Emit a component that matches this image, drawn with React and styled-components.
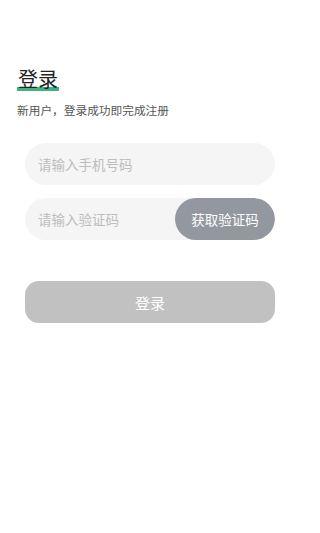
import React from "react";
import styled, { createGlobalStyle } from "styled-components";

const Global = createGlobalStyle`
  html, body { margin: 0; padding: 0; background: #fff; }
  body { font-family: "Noto Sans CJK SC", "Noto Sans", sans-serif; }
  * { box-sizing: border-box; }
`;

const Page = styled.div`
  width: 300px;
  min-height: 533px;
  background: #fff;
  display: flex;
  flex-direction: column;
`;

const Header = styled.div`
  padding: 66px 0 0 17px;
  display: flex;
  flex-direction: column;
  align-items: flex-start;
`;

const Title = styled.h1`
  margin: 0;
  font-size: 20px;
  font-weight: 400;
  line-height: 26px;
  color: #222;
  padding: 0 1px;
  background: linear-gradient(to bottom, transparent 21px, #3fb27f 21px, #3fb27f 25px, transparent 25px);
`;

const Subtitle = styled.p`
  margin: 10px 0 0;
  font-size: 11.7px;
  line-height: 16px;
  color: #555;
`;

const Form = styled.div`
  padding: 25px 25px 0;
  display: flex;
  flex-direction: column;
  gap: 13px;
`;

const Field = styled.div`
  height: 42px;
  border-radius: 21px;
  background: #f5f5f5;
  display: flex;
  align-items: center;
  overflow: hidden;
`;

const Input = styled.input`
  flex: 1;
  min-width: 0;
  height: 100%;
  border: none;
  outline: none;
  background: transparent;
  padding: 0 0 0 13px;
  font-family: inherit;
  font-size: 13.5px;
  color: #333;
  &::placeholder { color: #bdbdbd; }
`;

const CodeButton = styled.button`
  width: 100px;
  height: 42px;
  border: none;
  border-radius: 21px;
  background: #9398a0;
  color: #fff;
  font-family: inherit;
  font-size: 13.5px;
  padding: 0;
`;

const LoginButton = styled.button`
  margin: 41px 25px 0;
  height: 42px;
  border: none;
  border-radius: 14px;
  background: #c1c1c1;
  color: #fff;
  font-family: inherit;
  font-size: 15px;
  padding: 0;
`;

export default function App() {
  return (
    <Page>
      <Global />
      <Header>
        <Title>登录</Title>
        <Subtitle>新用户，登录成功即完成注册</Subtitle>
      </Header>
      <Form>
        <Field>
          <Input placeholder="请输入手机号码" />
        </Field>
        <Field>
          <Input placeholder="请输入验证码" />
          <CodeButton>获取验证码</CodeButton>
        </Field>
      </Form>
      <LoginButton>登录</LoginButton>
    </Page>
  );
}
